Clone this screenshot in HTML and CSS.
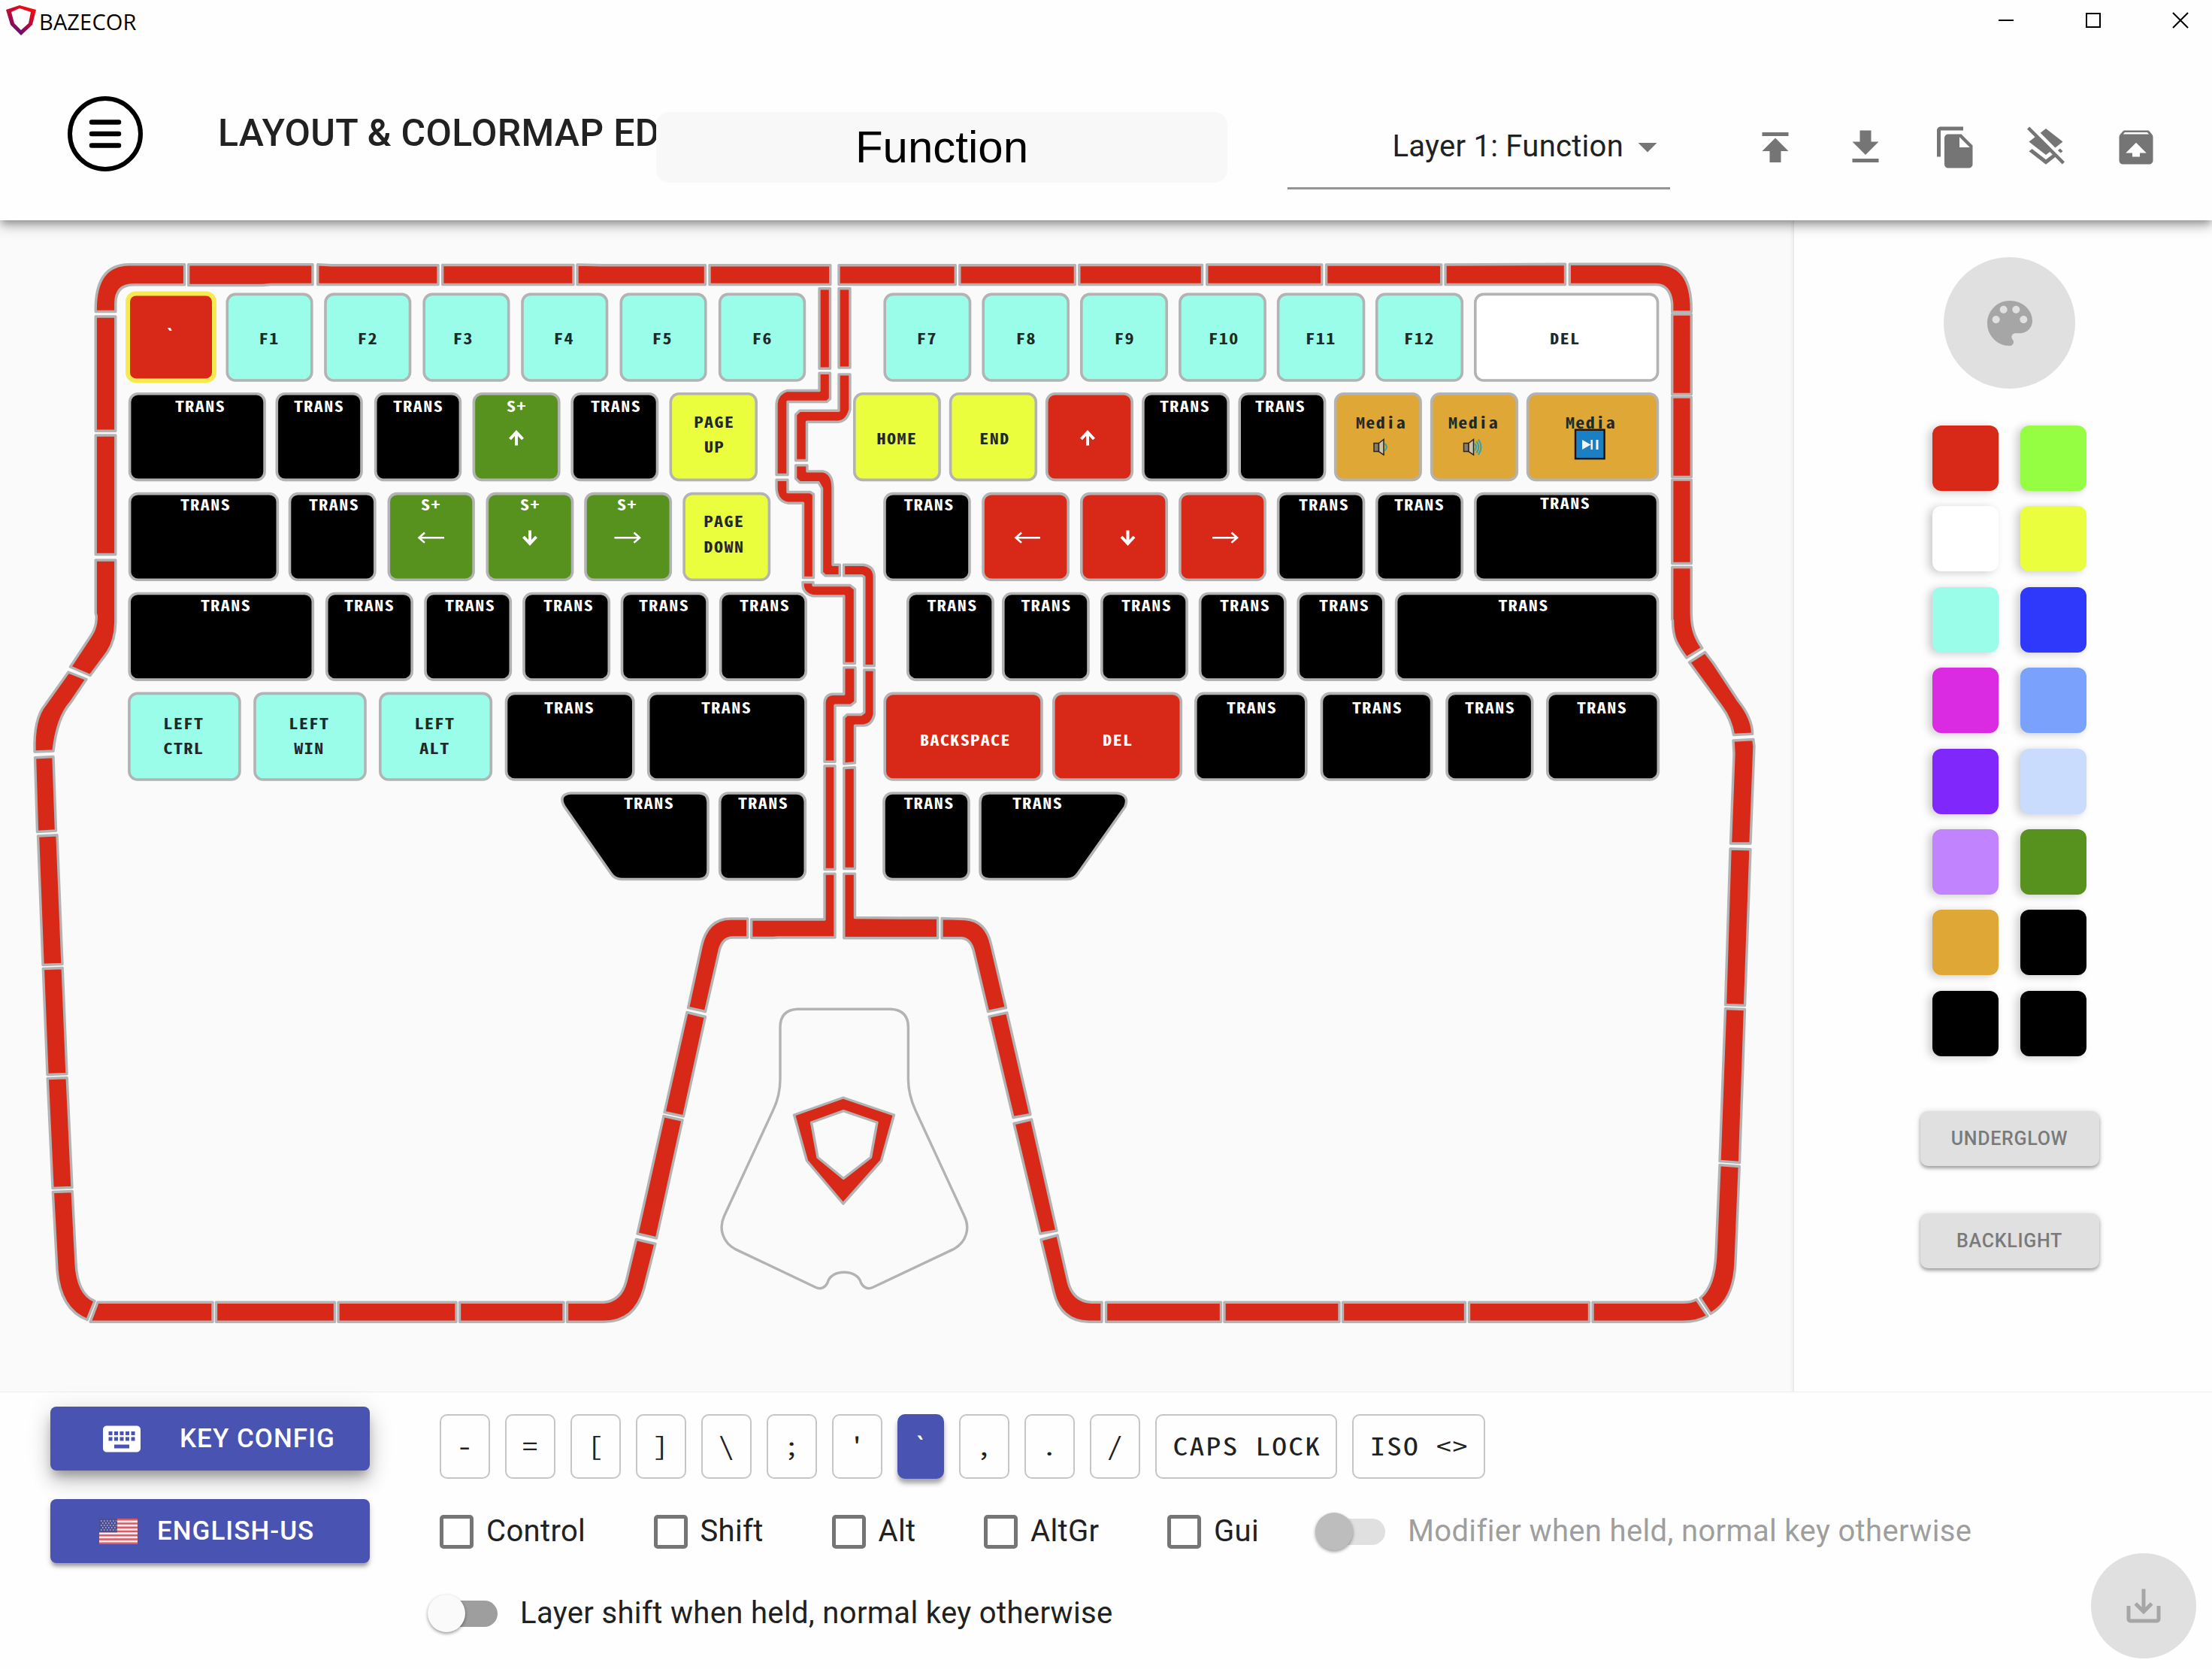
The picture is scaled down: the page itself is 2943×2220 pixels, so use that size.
FILE: index.html
```html
<!DOCTYPE html>
<html lang="en">
<head>
<meta charset="utf-8">
<title>Bazecor</title>
<link rel="stylesheet" href="styles.css">
</head>
<body>
<div class="app">
<header class="header">
  <div class="titlebar">
    <svg class="logo" viewBox="0 0 40 40"><defs><linearGradient id="lg" x1=".8" y1="0" x2=".3" y2="1"><stop offset="0" stop-color="#ff0a0a"/><stop offset=".45" stop-color="#c00a38"/><stop offset="1" stop-color="#52107c"/></linearGradient></defs><path fill="url(#lg)" fill-rule="evenodd" d="M0 6L18 0 40 6 35 26 20 40 6 26ZM7 9L11 24 20 33 30 24 33 9 18 4Z"/></svg>
    <span class="appname">BAZECOR</span>
    <div class="winbtns">
      <svg viewBox="0 0 20 20"><path d="M0 10H20"/></svg>
      <svg viewBox="0 0 20 20"><path d="M1 1H19V19H1Z"/></svg>
      <svg viewBox="0 0 20 20"><path d="M0 0L20 20M20 0L0 20"/></svg>
    </div>
  </div>
  <div class="toolbar">
    <svg class="menu" viewBox="0 0 100 100"><circle cx="50" cy="50" r="47"/><path d="M32 34.500H68M32 50H68M32 65.500H68"/></svg>
    <h1 class="title">LAYOUT &amp; COLORMAP ED</h1>
    <div class="layername">Function</div>
    <div class="select"><span>Layer 1: Function</span><svg viewBox="0 0 24 24"><path d="M7 10l5 5 5-5z"/></svg></div>
    <div class="actions">
      <svg viewBox="0 0 24 24"><path d="M5 4v2h14V4H5zm0 10h4v6h6v-6h4l-7-7-7 7z"/></svg>
      <svg viewBox="0 0 24 24"><path d="M19 9h-4V3H9v6H5l7 7 7-7zM5 18v2h14v-2H5z"/></svg>
      <svg viewBox="0 0 24 24"><path d="M16 1H4c-1.100 0-2 .9-2 2v14h2V3h12V1zm-1 4l6 6v10c0 1.100-.9 2-2 2H7.990C6.890 23 6 22.100 6 21l.01-14c0-1.100.89-2 1.990-2h7zm-1 7h5.500L14 6.500V12z"/></svg>
      <svg viewBox="0 0 24 24"><path d="M19.810 14.990l1.190-.92-1.430-1.430-1.190.92 1.430 1.430zm-.45-4.720L21 9l-9-7-2.910 2.270 7.870 7.880 2.400-1.880zM3.270 1L2 2.270l4.220 4.220L3 9l1.630 1.270L12 16l2.100-1.630 1.430 1.430L12 18.540l-7.370-5.730L3 14.070l9 7 4.950-3.850L20.730 21 22 19.730 3.270 1z"/></svg>
      <svg viewBox="0 0 24 24"><path d="M20.550 5.220l-1.390-1.680C18.880 3.210 18.470 3 18 3H6c-.47 0-.88.21-1.150.55L3.460 5.220C3.170 5.570 3 6.010 3 6.500V19c0 1.100.89 2 2 2h14c1.100 0 2-.9 2-2V6.500c0-.49-.17-.93-.45-1.280zM12 9.500l5.500 5.500H14v2h-4v-2H6.500L12 9.500zM5.120 5l.82-1h12l.93 1H5.120z"/></svg>
    </div>
  </div>
</header>

<main class="editor">
<svg class="keyboard" viewBox="0 294 2386 1557">
  <g class="glow">
    <path d="M245.600 352.300H172Q127.200 352.300 127.200 412V415H153.800V404Q153.800 379.300 178 379.300H245.600Z"/>
    <path d="M250.700 352.300H416V379H360L350 380H250.700Z"/>
    <path d="M422.700 352.300L440 353.300H583V379H422.700Z"/>
    <path d="M588.700 353H763V379H588.700Z"/>
    <path d="M768 352.500L800 353.300H938.500V379H768Z"/>
    <path d="M944 353.300H1104.800V379H944Z"/>
    <path d="M1116 353.300H1271.300V379H1116Z"/>
    <path d="M1276.800 353.300H1430.400V379H1276.800Z"/>
    <path d="M1435.800 353H1599.500V379H1435.800Z"/>
    <path d="M1605.700 352.500H1758.700V379H1605.700Z"/>
    <path d="M1764.600 352.500H1917.700V379H1764.600Z"/>
    <path d="M1923 352.500L2082.500 351.700V379H1923Z"/>
    <path d="M2088.300 351.700H2206Q2250.300 351.700 2250.300 412V415.400H2224.700V404Q2222 379 2203 379H2088.300Z"/>
    <path d="M2224.700 418.500H2250.300V525H2224.700Z"/>
    <path d="M2224.700 528.600H2250.300V635H2224.700Z"/>
    <path d="M2224.700 638.600H2250.300V750H2224.700Z"/>
    <path d="M2224.700 755H2250.300V816C2250.300 840 2258 853 2264.700 862.500L2243.800 875.500C2232 859 2225.500 850 2225.500 826L2224.700 824Z"/>
    <path d="M2268.500 868L2280 883 2313 933Q2331.500 956 2331.700 976.800L2306.500 978Q2303 957 2291 941L2247.500 881.500Z"/>
    <path d="M2332.800 984L2334 993 2329 1122.500H2302.500L2307 1003 2306 985.500Z"/>
    <path d="M2329 1130.300L2302 1129.500 2295.500 1337 2321.500 1338Z"/>
    <path d="M2321.500 1343L2295.500 1342 2288 1545 2314.500 1547Z"/>
    <path d="M2314.300 1552L2288 1550 2283 1668Q2281 1712 2262 1727L2276 1748Q2307 1730 2309 1680Z"/>
    <path d="M127.200 421.500H153.800V573.700H127.200Z"/>
    <path d="M127.200 579.500H153.800V738H127.200Z"/>
    <path d="M127.200 745.500H153.800V828C153.500 845 149 859 143 868L120 899 93.500 887.500 117 852C124 842 128.300 835 128.300 820L127.200 816Z"/>
    <path d="M91 894.500L115 904 94 935Q76 955 71 999.500L46 1000.500C45 970 50 950 60 938Z"/>
    <path d="M46.500 1008.200L71 1007 74.500 1105.500 49.500 1107Z"/>
    <path d="M50.500 1112.500L76 1111.300 83 1283 57 1284Z"/>
    <path d="M57.300 1289L83.200 1288 89 1429 63 1430Z"/>
    <path d="M63.200 1435L89.200 1434 96 1580 70 1581Z"/>
    <path d="M70.300 1586L96.200 1585 101 1680Q103 1722 126 1731L116 1756Q80 1742 76 1690Z"/>
    <path d="M130 1732.800H283V1758.800H120Z"/>
    <path d="M287.500 1732.800H445.500V1758.800H287.500Z"/>
    <path d="M450 1732.800H607V1758.800H450Z"/>
    <path d="M611.500 1732.800H750V1758.800H611.500Z"/>
    <path d="M754.500 1732.800H803Q826 1731 833 1705L846.500 1649 872 1655 857 1714Q845 1758.800 803 1758.800H754.500Z"/>
    <path d="M848 1641.500L873.500 1647.500 908 1490.500 883 1485Z"/>
    <path d="M884 1480L909.500 1485.500 938.500 1353 914 1347Z"/>
    <path d="M915.500 1341L938.500 1346 957 1265Q961 1248 974 1247.500H994.700V1222.500H973Q941 1222 933 1260Z"/>
    <path d="M999.700 1223.500H1097V1162.600H1111V1247.500H1035L1028 1248H999.700Z"/>
    <path d="M1122.800 1162.600H1137.500V1221L1200 1221.500H1247.700V1248.200H1122.800Z"/>
    <path d="M1253 1222L1284 1223Q1312 1225 1319 1258L1338.500 1341 1314.500 1346 1296 1268Q1292 1248.200 1278 1248.200H1253Z"/>
    <path d="M1339.800 1347.500L1371 1483 1348 1487 1316 1352.700Z"/>
    <path d="M1372.500 1489.500L1406 1637.500 1384 1641.500 1349 1495Z"/>
    <path d="M1407 1643.500L1421 1705Q1427 1731 1452 1732.800H1466V1758.800H1449Q1411 1758 1402 1719L1385 1649.500Z"/>
    <path d="M1471.500 1732.800H1624.500V1758.800H1471.500Z"/>
    <path d="M1629 1732.800H1782V1758.800H1629Z"/>
    <path d="M1786.500 1732.800H1949.500V1758.800H1786.500Z"/>
    <path d="M1954.500 1732.800H2114.500V1758.800H1954.500Z"/>
    <path d="M2119 1732.800H2240Q2250 1732.800 2257 1729L2272 1751Q2258 1758.800 2240 1758.800H2119Z"/>
    <path d="M1090 384.300H1104.500V490.700H1090Z"/>
    <path d="M1090 496.700H1104.500V531L1100 535H1048V632H1033V538Q1034 524 1047 520H1090Z"/>
    <path d="M1033 638.700H1048V655H1078L1082.500 658V769H1068.500V669.700H1048Q1033 667 1033 648Z"/>
    <path d="M1068 775H1082V779H1131L1137.500 784V883H1122.800V793.300H1082Q1068 790 1068 778Z"/>
    <path d="M1122.800 888.400H1138V934L1132 938.700H1111V1013.800H1097V935Q1098 924 1108 923.700H1122.800Z"/>
    <path d="M1097 1019.300H1111V1157H1097Z"/>
    <path d="M1116 384.300H1131V489.600H1116Z"/>
    <path d="M1116 498.400H1131V545Q1127 561 1115 561.700H1073.500V613H1058.600V552L1064 546.700H1116Z"/>
    <path d="M1058.600 619.400H1074V627.400H1095Q1108 630 1108 650V751.700H1117.300V766.300H1098L1093.500 762V650L1089 642.300H1064L1058.600 637Z"/>
    <path d="M1122.500 751.700H1149Q1163.300 754 1163.300 768V886.300H1149.800V768L1147 766.300H1122.500Z"/>
    <path d="M1149.800 891.500H1163.300V951Q1160 965 1149 965.600H1137.500V1015.300L1122.800 1016.600V955L1127 951H1146L1149.800 948Z"/>
    <path d="M1122.800 1022L1137.500 1021.300V1156H1122.800Z"/>
    <path fill-rule="evenodd" d="M1121.800 1460.500L1189.500 1483.500 1172.500 1544.500 1121.800 1601.500 1073.500 1544.500 1056.500 1483.500ZM1122.200 1478.200L1079.500 1493.500 1088 1540 1122.200 1568 1158.500 1540 1167 1493.500Z"/>
  </g>
  <path class="neuron" d="M1061 1342.800H1185Q1208.400 1344 1208.400 1367V1436C1208.400 1452 1212 1464 1218 1477.400L1283 1618C1291 1634 1286 1653 1268 1662.400L1161 1713C1154 1716 1149 1713 1145.500 1706.800C1141 1688 1105 1688 1101 1706.800C1098 1713 1092 1716 1085.500 1713L979 1662.400C961 1653 956 1634 963.500 1618L1028.500 1477.400C1035 1464 1038 1452 1038 1436V1367Q1038 1344 1061 1342.800Z"/>

  <g class="keys" transform="translate(0 391.900)">
    <rect class="red sel" x="170" y="-1" width="115"/>
    <rect class="aqua" x="302.300" width="112.500"/><rect class="aqua" x="433" width="112.500"/><rect class="aqua" x="564.200" width="112.500"/><rect class="aqua" x="695" width="112.500"/><rect class="aqua" x="826.300" width="112.500"/><rect class="aqua" x="957.700" width="112.700"/>
    <rect class="aqua" x="1177.200" width="113.300"/><rect class="aqua" x="1308.200" width="113"/><rect class="aqua" x="1438.800" width="113.400"/><rect class="aqua" x="1569.900" width="113.200"/><rect class="aqua" x="1700.600" width="113.900"/><rect class="aqua" x="1831.700" width="113.600"/><rect class="white" x="1962.800" width="242.700"/>
  </g>
  <g class="keys" transform="translate(0 524.300)">
    <rect x="172.600" width="179.500"/><rect x="368.300" width="112.700"/><rect x="499.700" width="112.700"/><rect class="green" x="630.400" width="113.400"/><rect x="761.200" width="113.300"/><rect class="yellow" x="892.300" width="113.900"/>
    <rect class="yellow" x="1136.800" width="113.300"/><rect class="yellow" x="1264.600" width="113.700"/><rect class="red" x="1392.700" width="113.500"/><rect x="1520.900" width="113.300"/><rect x="1649.200" width="113.400"/><rect class="gold" x="1776.700" width="113.400"/><rect class="gold" x="1904.700" width="113.600"/><rect class="gold" x="2032.600" width="172.800"/>
  </g>
  <g class="keys" transform="translate(0 657.100)">
    <rect x="172.600" width="196.700"/><rect x="385.500" width="113.300"/><rect class="green" x="517.300" width="112.800"/><rect class="green" x="648.300" width="113.300"/><rect class="green" x="779" width="113.300"/><rect class="yellow" x="910.100" width="113.300"/>
    <rect x="1177" width="113"/><rect class="red" x="1308" width="113.200"/><rect class="red" x="1438.800" width="113.400"/><rect class="red" x="1569.900" width="113.200"/><rect x="1700.600" width="113.900"/><rect x="1831.700" width="113.600"/><rect x="1962.800" width="242.700"/>
  </g>
  <g class="keys" transform="translate(0 790)">
    <rect x="172.200" width="244.100"/><rect x="434.700" width="113.500"/><rect x="566" width="113.300"/><rect x="697" width="113.300"/><rect x="827.500" width="113.500"/><rect x="958.700" width="113.500"/>
    <rect x="1207.800" width="113.300"/><rect x="1334.800" width="113.200"/><rect x="1465.800" width="113.300"/><rect x="1596.600" width="113.300"/><rect x="1727.200" width="113.600"/><rect x="1857.600" width="348"/>
  </g>
  <g class="keys" transform="translate(0 922.900)">
    <rect class="aqua" x="171.900" width="147"/><rect class="aqua" x="339" width="147"/><rect class="aqua" x="505.800" width="147.500"/><rect x="673.500" width="169.300"/><rect x="862.700" width="209.300"/>
    <rect class="red" x="1177.200" width="208.800"/><rect class="red" x="1401.800" width="169.500"/><rect x="1590.800" width="147"/><rect x="1758.400" width="146.200"/><rect x="1925" width="113.700"/><rect x="2058.800" width="147.500"/>
  </g>
  <g class="keys" transform="translate(0 1055.500)">
    <path d="M759 0H930Q942 0 942 12V102.500Q942 114.500 930 114.500H827Q818 114.500 813 107L751 18Q742 2 759 0Z"/>
    <rect x="957.700" width="113.600"/><rect x="1176" width="113"/>
    <path d="M1316 0H1486Q1503 2 1497 18L1434 107Q1429 114.500 1420 114.500H1316Q1304 114.500 1304 102.500V12Q1304 0 1316 0Z"/>
  </g>

  <g class="cap dark">
    <text x="357.700" y="459">F1</text><text x="489" y="459">F2</text><text x="616" y="459">F3</text><text x="750" y="459">F4</text><text x="881" y="459">F5</text><text x="1014" y="459">F6</text><text x="1233" y="459">F7</text><text x="1365" y="459">F8</text><text x="1496" y="459">F9</text><text x="1628" y="459">F10</text><text x="1757" y="459">F11</text><text x="1888" y="459">F12</text><text x="2082" y="459">DEL</text>
    <text x="950" y="570">PAGE</text><text x="950" y="603">UP</text><text x="1193" y="592">HOME</text><text x="1323" y="592">END</text>
    <text x="963" y="702">PAGE</text><text x="963" y="736">DOWN</text>
    <text x="244" y="971">LEFT</text><text x="244" y="1004">CTRL</text><text x="411" y="971">LEFT</text><text x="411" y="1004">WIN</text><text x="578" y="971">LEFT</text><text x="578" y="1004">ALT</text>
    <text x="1837" y="571">Media</text><text x="1960" y="571">Media</text><text x="2116" y="571">Media</text>
  </g>
  <g class="cap light">
    <text x="227" y="454">`</text>
    <text x="266" y="549">TRANS</text><text x="424" y="549">TRANS</text><text x="556" y="549">TRANS</text><text x="687" y="549">S+</text><text x="819" y="549">TRANS</text><text x="1576" y="549">TRANS</text><text x="1703" y="549">TRANS</text>
    <text x="273" y="680">TRANS</text><text x="444" y="680">TRANS</text><text x="573" y="680">S+</text><text x="705" y="680">S+</text><text x="834" y="680">S+</text><text x="1235.500" y="680">TRANS</text><text x="1761" y="680">TRANS</text><text x="1888" y="680">TRANS</text><text x="2082" y="678">TRANS</text>
    <text x="300" y="814">TRANS</text><text x="491" y="814">TRANS</text><text x="625" y="814">TRANS</text><text x="756" y="814">TRANS</text><text x="883" y="814">TRANS</text><text x="1017" y="814">TRANS</text><text x="1266.500" y="814">TRANS</text><text x="1391.500" y="814">TRANS</text><text x="1525" y="814">TRANS</text><text x="1656" y="814">TRANS</text><text x="1788" y="814">TRANS</text><text x="2026.500" y="814">TRANS</text>
    <text x="757" y="950">TRANS</text><text x="966" y="950">TRANS</text><text x="1284" y="993">BACKSPACE</text><text x="1487" y="993">DEL</text><text x="1665" y="950">TRANS</text><text x="1832" y="950">TRANS</text><text x="1982" y="950">TRANS</text><text x="2131" y="950">TRANS</text>
    <text x="863" y="1077">TRANS</text><text x="1015" y="1077">TRANS</text><text x="1235.500" y="1077">TRANS</text><text x="1380" y="1077">TRANS</text>
  </g>
  <g class="bold-arrow">
    <path d="M687 593V576M678.500 584.500L687 575.500 695.500 584.500"/><path d="M1447 593V576M1438.500 584.500L1447 575.500 1455.500 584.500"/>
    <path d="M705 706V723M696.500 714.500L705 723.500 713.500 714.500"/><path d="M1500.500 706V723M1492 714.500L1500.500 723.500 1509 714.500"/>
  </g>
  <g class="thin-arrow">
    <path d="M591 715.700H558M565 709L557.500 715.700 565 722.400"/><path d="M1384 715.700H1352M1359 709L1351.500 715.700 1359 722.400"/>
    <path d="M817.500 715.700H850M843.500 709L851 715.700 843.500 722.400"/><path d="M1613 715.700H1645M1638.500 709L1646 715.700 1638.500 722.400"/>
  </g>
  <g class="speaker">
    <path class="body" d="M1828 590H1834.500V601H1828Z"/><path class="cone" d="M1834.500 590L1841 585V605.500L1834.500 601Z"/><path class="wave" d="M1842.500 590.500Q1847 595 1842.500 600"/>
    <path class="body" d="M1947.500 590H1954V601H1947.500Z"/><path class="cone" d="M1954 590L1960.500 585V605.500L1954 601Z"/><path class="wave" d="M1962 590.500Q1966 595 1962 600M1964.500 587.500Q1970 595 1964.500 603M1967 585Q1974 595 1967 605.500"/>
  </g>
  <rect class="playbox" x="2096" y="572.200" width="38.600" height="38.400"/>
  <path fill="#f6f6f0" d="M2105 585.500V598.500L2116.500 592ZM2116.500 585.500H2119V598.500H2116.500ZM2123.500 585.500H2126.500V598.500H2123.500Z"/>
</svg>

<aside class="palette">
  <div class="picker"><svg viewBox="0 0 24 24"><path d="M12 3c-4.970 0-9 4.030-9 9s4.030 9 9 9c.83 0 1.500-.67 1.500-1.500 0-.39-.15-.74-.39-1.010-.23-.26-.38-.61-.38-.99 0-.83.67-1.500 1.500-1.500H16c2.760 0 5-2.240 5-5 0-4.420-4.030-8-9-8zm-5.500 9c-.83 0-1.500-.67-1.500-1.500S5.670 9 6.500 9 8 9.670 8 10.500 7.330 12 6.500 12zm3-4C8.670 8 8 7.330 8 6.500S8.670 5 9.500 5s1.500.67 1.500 1.500S10.330 8 9.500 8zm5 0c-.83 0-1.500-.67-1.500-1.500S13.670 5 14.500 5s1.500.67 1.500 1.500S15.330 8 14.500 8zm3 4c-.83 0-1.500-.67-1.500-1.500S16.670 9 17.500 9s1.500.67 1.500 1.500-.67 1.500-1.500 1.500z"/></svg></div>
  <div class="swatches">
    <i style="background:#d82817"></i><i style="background:#95fd42"></i>
    <i style="background:#fff"></i><i style="background:#ebfe3e"></i>
    <i style="background:#9afdea"></i><i style="background:#2f39fb"></i>
    <i style="background:#da2be3"></i><i style="background:#7aa2fc"></i>
    <i style="background:#8028fb"></i><i style="background:#c9dcfe"></i>
    <i style="background:#c184fe"></i><i style="background:#57911e"></i>
    <i style="background:#dea736"></i><i style="background:#000"></i>
    <i style="background:#000"></i><i style="background:#000"></i>
  </div>
  <button class="side">UNDERGLOW</button>
  <button class="side">BACKLIGHT</button>
</aside>
</main>

<footer class="config">
  <div class="modes">
    <button class="mode raised"><svg viewBox="0 0 24 24"><path fill="#fff" d="M20 5H4c-1.100 0-1.990.9-1.990 2L2 17c0 1.100.9 2 2 2h16c1.100 0 2-.9 2-2V7c0-1.100-.9-2-2-2zm-9 3h2v2h-2V8zm0 3h2v2h-2v-2zM8 8h2v2H8V8zm0 3h2v2H8v-2zm-1 2H5v-2h2v2zm0-3H5V8h2v2zm9 7H8v-2h8v2zm0-4h-2v-2h2v2zm0-3h-2V8h2v2zm3 3h-2v-2h2v2zm0-3h-2V8h2v2z"/></svg><span>KEY CONFIG</span></button>
    <button class="mode lang"><svg class="flag" viewBox="0 0 51 34"><path fill="#f3e9ee" d="M0 0H51V34H0Z"/><path stroke="#dd5a62" stroke-width="2.620" d="M0 1.310H51M0 6.540H51M0 11.770H51M0 17H51M0 22.230H51M0 27.460H51M0 32.690H51"/><path fill="#4d4f94" d="M0 0H24V18.300H0Z"/><path stroke="#b9bbdc" stroke-width="1.300" stroke-dasharray="1.500 2.500" d="M2 3H23M4 6H22M2 9H23M4 12H22M2 15H23"/></svg><span>ENGLISH-US</span></button>
  </div>
  <div class="options">
    <div class="keyrow">
      <b><span>-</span></b><b><span>=</span></b><b><span>[</span></b><b><span>]</span></b><b><span>\</span></b><b><span>;</span></b><b><span>'</span></b><b class="on"><span>`</span></b><b><span>,</span></b><b><span>.</span></b><b><span>/</span></b><b class="caps"><span>CAPS LOCK</span></b><b class="iso"><span>ISO &lt;&gt;</span></b>
    </div>
    <div class="mods">
      <label class="m1"><i class="box"></i>Control</label><label class="m2"><i class="box"></i>Shift</label><label class="m3"><i class="box"></i>Alt</label><label class="m4"><i class="box"></i>AltGr</label><label class="m5"><i class="box"></i>Gui</label>
      <label class="off"><i class="switch"></i>Modifier when held, normal key otherwise</label>
    </div>
    <div class="shift"><label><i class="switch"></i>Layer shift when held, normal key otherwise</label></div>
  </div>
  <div class="save"><svg viewBox="0 0 24 24"><path d="M19 12v7H5v-7H3v7c0 1.100.9 2 2 2h14c1.100 0 2-.9 2-2v-7h-2zm-6 .67l2.590-2.580L17 11.500l-5 5-5-5 1.410-1.410L11 12.670V3h2z"/></svg></div>
</footer>
</div>
</body>
</html>
```
FILE: styles.css
```css
*{box-sizing:border-box}
body{margin:0;background:#fff;font-family:Roboto,"Liberation Sans",sans-serif;color:#212121}
button{font:inherit;border:0;padding:0}
svg{display:block;flex:none}
.app{width:2943px;height:2220px;display:flex;flex-direction:column;overflow:hidden}

.header{height:293px;flex:none;position:relative;z-index:2;background:#fefefe;box-shadow:0 5px 10px -2px rgba(0,0,0,.3),0 10px 13px rgba(0,0,0,.14),0 2px 25px rgba(0,0,0,.12)}
.titlebar{height:54px;display:flex;align-items:center;padding-left:8px}
.logo{width:40px;height:40px}
.appname{font:29px/40px "Open Sans",sans-serif;color:#000;margin-left:4px;letter-spacing:.15px;padding-top:3px}
.winbtns{margin-left:auto;display:flex;gap:96px;padding-right:32px}
.winbtns svg{width:20px;height:20px;fill:none;stroke:#000;stroke-width:2;overflow:visible}
.toolbar{height:239px;display:flex;align-items:flex-start;padding-top:2px}
.menu{width:100px;height:100px;margin:72px 0 0 90px;fill:none;stroke:#000;stroke-width:6}
.menu path{stroke-width:6.500;stroke-linecap:round}
.title{font-size:50px;font-weight:500;letter-spacing:.28px;line-height:60px;margin:91px 0 0 100px;width:583px;height:60px;white-space:nowrap}
.layername{position:relative;width:760px;height:94px;margin:93px 0 0;background:#f8f8f8;border-radius:17px;font:60px/94px "Liberation Sans",sans-serif;color:#000;text-align:center}
.select{width:509px;height:114px;margin:82px 0 0 80px;border-bottom:3px solid #949494;display:flex;justify-content:flex-end;font-size:40px;letter-spacing:.27px;line-height:60px;padding:27px 0 0;white-space:nowrap}
.select svg{width:60px;height:60px;fill:#757575;margin:0 0 0 2px}
.actions{display:flex;gap:60px;margin:110px 0 0 110px}
.actions svg{width:60px;height:60px;fill:#757575}

.editor{display:flex;height:1558px;flex:none}
.keyboard{width:2386px;height:1558px;background:#fafafa}
.glow path{fill:#d82817;stroke:#b3b3b3;stroke-width:3.400;stroke-linejoin:round}
.neuron{fill:none;stroke:#b3b3b3;stroke-width:3.400}
.keys rect,.keys path{stroke:#b3b3b3;stroke-width:3.600}
.keys rect{height:114.600px;rx:11px}
.keys .red{fill:#d82817}
.keys .aqua{fill:#9afdea}
.keys .white{fill:#fff}
.keys .green{fill:#57911e}
.keys .yellow{fill:#ebfe3e}
.keys .gold{fill:#dea736}
.keys .sel{stroke:#f8e94e;stroke-width:6;height:116px}
.cap{font-family:"Noto Sans Mono CJK SC","Source Code Pro","DejaVu Sans Mono",monospace;font-weight:700;font-size:20px;letter-spacing:1.200px;text-anchor:middle}
.cap text{transform-box:fill-box;transform-origin:50% 50%;transform:translateX(.5px) scaleX(1.2)}
.dark{fill:#1f2a26}
.light{fill:#fff}
.bold-arrow path{fill:none;stroke:#fff;stroke-width:4}
.thin-arrow path{fill:none;stroke:#fff;stroke-width:2.600}
.speaker path{stroke:#2a2418;stroke-width:1.500}
.speaker .body{fill:#857b6b}
.speaker .cone{fill:#cdc2ae}
.speaker .wave{fill:none;stroke:#2aa3b5;stroke-width:2}
.playbox{fill:#1c7fc4;stroke:#16130c;stroke-width:2.400}

.palette{width:557px;background:#fefefe;border-left:1px solid #e8e8e8;box-shadow:-2px 0 4px rgba(0,0,0,.06);display:flex;flex-direction:column;align-items:center;padding:49px 0 0 17px}
.picker{width:175px;height:175px;border-radius:50%;background:#e0e0e0;display:flex;align-items:center;justify-content:center;flex:none}
.picker svg{width:80px;height:80px;fill:#a6a6a6}
.swatches{display:grid;grid-template-columns:88px 88px;grid-auto-rows:87px;gap:20.400px 29px;margin-top:49px}
.swatches i{border-radius:12px;box-shadow:-5px 2px 12px rgba(0,0,0,.2)}
.side{width:238px;height:73px;background:#e0e0e0;border-radius:10px;color:#7a7a7a;font-size:25px;font-weight:500;letter-spacing:.7px;margin-top:73px;box-shadow:0 3px 4px rgba(0,0,0,.3),0 1px 9px rgba(0,0,0,.16)}
.side+.side{margin-top:63px}

.config{flex:1;display:flex;border-top:1px solid #eee;background:#fefefe;position:relative}
.modes{margin:19px 0 0 67px;width:425px;display:flex;flex-direction:column;gap:38px}
.mode{height:85px;background:#4953b2;border-radius:8px;color:#fff;display:flex;align-items:center;font-size:35px;font-weight:500;letter-spacing:1px;box-shadow:0 6px 5px -2px rgba(0,0,0,.3),0 4px 8px rgba(0,0,0,.16)}
.raised{box-shadow:0 10px 13px -4px rgba(0,0,0,.25),0 16px 26px rgba(0,0,0,.16),0 5px 35px rgba(0,0,0,.12)}
.mode svg{width:60px;height:60px;margin:0 47px 0 65px}
.mode .flag{width:51px;height:34px;margin:0 26px 0 65px}
.options{margin-left:93px;padding-top:29px}
.keyrow{display:flex;gap:20px}
.keyrow b{width:67px;height:86px;border:2px solid #c6c6c6;border-radius:10px;display:flex;align-items:center;justify-content:center;font:400 33px/82px "Noto Sans Mono CJK SC","Source Code Pro","DejaVu Sans Mono",monospace;letter-spacing:1.800px;white-space:pre}
.keyrow span{display:block;transform:scaleX(1.2);margin:-4px 0 0 2px}
.keyrow .on{width:62px;background:#4953b2;border:0;color:#fff;box-shadow:0 6px 6px rgba(0,0,0,.35)}
.keyrow .caps{width:242px}
.keyrow .iso{width:177px}
.mods{display:flex;margin-top:40px;height:60px}
.mods label,.shift label{display:flex;align-items:center;font-size:40px;letter-spacing:.35px;line-height:60px;white-space:nowrap}
.box{width:45px;height:45px;border:5px solid #757575;border-radius:5px;margin-right:17px;flex:none}
.m1{width:284.500px}.m2{width:237px}.m3{width:202.500px}.m4{width:244px}.m5{width:205px}
.switch{width:85px;height:35px;border-radius:18px;background:#9e9e9e;position:relative;margin-right:30px;flex:none}
.switch::before{content:"";position:absolute;left:-8px;top:-8px;width:50px;height:50px;border-radius:50%;background:#fafafa;box-shadow:0 2px 4px rgba(0,0,0,.4)}
.off{color:#9e9e9e}
.off .switch{background:#e0e0e0}
.off .switch::before{background:#bdbdbd}
.shift{margin:49px 0 0 -8px}
.save{position:absolute;right:21px;top:214px;width:140px;height:140px;border-radius:50%;background:#e0e0e0;display:flex;align-items:center;justify-content:center}
.save svg{width:60px;height:60px;fill:#a6a6a6}
```
